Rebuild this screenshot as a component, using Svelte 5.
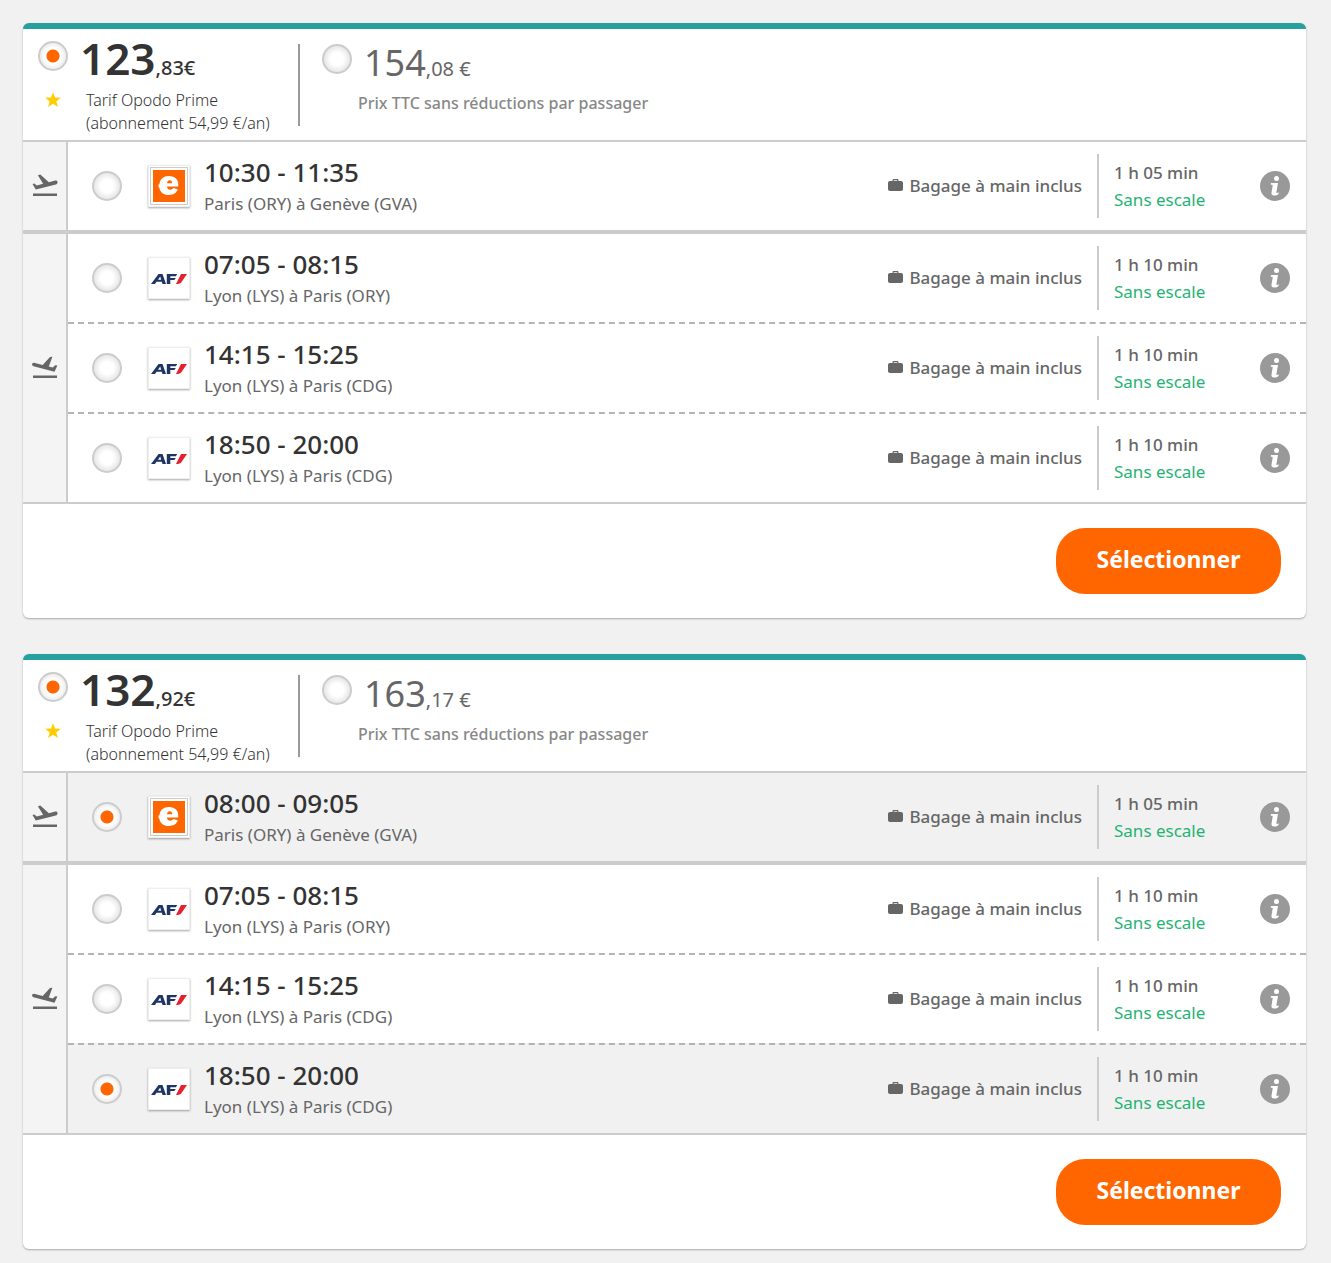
<script>
  const returns = [
    { time: '07:05 - 08:15', route: 'Lyon (LYS) à Paris (ORY)', length: '1 h 10 min', airline: 'af' },
    { time: '14:15 - 15:25', route: 'Lyon (LYS) à Paris (CDG)', length: '1 h 10 min', airline: 'af' },
    { time: '18:50 - 20:00', route: 'Lyon (LYS) à Paris (CDG)', length: '1 h 10 min', airline: 'af' }
  ];
  const offers = [
    {
      id: 'a', prime: ['123', ',83€'], full: ['154', ',08 €'],
      legs: [
        { kind: 'out', picked: -1, flights: [{ time: '10:30 - 11:35', route: 'Paris (ORY) à Genève (GVA)', length: '1 h 05 min', airline: 'ez' }] },
        { kind: 'back', picked: -1, flights: returns }
      ]
    },
    {
      id: 'b', prime: ['132', ',92€'], full: ['163', ',17 €'],
      legs: [
        { kind: 'out', picked: 0, flights: [{ time: '08:00 - 09:05', route: 'Paris (ORY) à Genève (GVA)', length: '1 h 05 min', airline: 'ez' }] },
        { kind: 'back', picked: 2, flights: returns }
      ]
    }
  ];
</script>

<main>
  {#each offers as offer}
    <form class="card" onsubmit={(e) => e.preventDefault()}>
      <header>
        <div class="fare prime">
          <input type="radio" name="fare-{offer.id}" id="prime-{offer.id}" checked />
          <label class="price" for="prime-{offer.id}">{offer.prime[0]}<small>{offer.prime[1]}</small></label>
          <svg class="star" viewBox="0 0 16 16" aria-hidden="true"><path d="M8 .3l2 5.300 5.800.2-4.500 3.600 1.600 5.600L8 11.800 3.100 15l1.600-5.600L.2 5.800 6 5.600z" /></svg>
          <p>Tarif Opodo Prime<br />(abonnement 54,99 €/an)</p>
        </div>
        <div class="fare full">
          <input type="radio" name="fare-{offer.id}" id="full-{offer.id}" />
          <label class="price" for="full-{offer.id}">{offer.full[0]}<small>{offer.full[1]}</small></label>
          <p>Prix TTC sans réductions par passager</p>
        </div>
      </header>

      {#each offer.legs as leg}
        <section class="leg">
          <div class="side">
            <svg class="plane" viewBox="0 0 26 26" aria-hidden="true">
              {#if leg.kind === 'out'}
                <path d="M1 22.500h24v2.500H1zM25.500 10.700c-.3-1-1.300-1.300-2.300-1.100l-6.300 1.600L8.300 3.600l-2.400.6 5.200 8.600-6.300 1.600-2.500-1.900-1.800.4 3.300 5.700 20-5.100c1.200-.3 2-1.600 1.700-2.800z" />
              {:else}
                <path d="M1 22.500h24v2.500H1zM.3 10.600C.8 9.800 1.800 9.600 3 9.900l7.700 2L18 3.900l2.400-.2-3.600 9.900 3.900 1 2.500-2.300 2.200.1-2.900 6.300L1.500 13.200c-1.200-.4-1.700-1.500-1.200-2.600z" />
              {/if}
            </svg>
          </div>
          <div class="flights">
            {#each leg.flights as f, i}
              <div class="flight" class:selected={leg.picked === i}>
                <input type="radio" name="{leg.kind}-{offer.id}" id="{leg.kind}-{offer.id}-{i}" checked={leg.picked === i} />
                <span class="logo">
                  {#if f.airline === 'ez'}
                    <svg viewBox="0 0 38 38" role="img" aria-label="easyJet">
                      <rect x=".5" y=".5" width="37" height="37" fill="#fff" stroke="#ccc" />
                      <rect x="3" y="3" width="32" height="32" fill="#f60" />
                      <path fill="#fff" fill-rule="evenodd" d="M19 9c6 0 9.500 3.500 9.300 9l-.2 1.500H17c.3 2.200 1.500 3.200 3.300 3.200 1.400 0 2.300-.6 3-1.700l4.500 1.300C26.500 26.300 23.500 28 19 28c-5.500 0-9-3-9.700-7.600L8.500 20v-2.400l.9-.3C10 12 13.500 9 19 9zm-2 7.200h5.200c-.1-2-1-3-2.500-3s-2.500 1-2.700 3z" />
                    </svg>
                  {:else}
                    <svg viewBox="0 0 38 38" role="img" aria-label="Air France">
                      <path fill="#1f3564" fill-rule="evenodd" d="M1 25l7.500-10h4L16 25h-3.500l-.7-2.200H6.500L5 25zm7-4.300h3.200l-1-3.200zM16.800 15h10.500l-1.500 2.200h-5.500v1.700h5.500l-1.400 2h-4.100V25h-3.500z" />
                      <path fill="#e8202e" d="M31 15h6l-5.500 8c-1 1.500-2.500 2-5.500 2z" />
                    </svg>
                  {/if}
                </span>
                <label class="info" for="{leg.kind}-{offer.id}-{i}">
                  <strong>{f.time}</strong>
                  <span>{f.route}</span>
                </label>
                <span class="bag">
                  <svg viewBox="0 0 15 12" aria-hidden="true"><path fill-rule="evenodd" d="M4.500 2V1.200C4.500.5 5 0 5.700 0h3.600c.7 0 1.200.5 1.200 1.200V2H13c1.200 0 2 .8 2 2v6c0 1.200-.8 2-2 2H2c-1.200 0-2-.8-2-2V4c0-1.200.8-2 2-2zm1.200 0h3.600v-.8H5.700z" /></svg>
                  Bagage à main inclus
                </span>
                <span class="length"><b>{f.length}</b><em>Sans escale</em></span>
                <button type="button" class="details" aria-label="Détails du vol">
                  <svg viewBox="0 0 30 30" aria-hidden="true">
                    <circle cx="15" cy="15" r="15" fill="#999" />
                    <circle cx="16.500" cy="7.500" r="2.500" fill="#fff" />
                    <path fill="#fff" d="M11 12h7l-1.600 9c-.1.800.2 1 .8.900l1.600-.6-.3 1.700c-1.300 1.100-2.800 1.600-4.500 1.500-1.900-.1-2.800-1.200-2.500-3l1.200-7c.1-.6-.1-.8-.6-.8h-1.400z" />
                  </svg>
                </button>
              </div>
            {/each}
          </div>
        </section>
      {/each}

      <footer><button type="submit" class="select">Sélectionner</button></footer>
    </form>
  {/each}
</main>

<style>
  :global(body) { margin: 0; background: #f1f1f1; }
  main {
    box-sizing: border-box;
    display: flex;
    flex-direction: column;
    gap: 36px;
    padding: 23px 25px 13px 23px;
    font-family: "Noto Sans", "Open Sans", sans-serif;
    color: #666;
  }
  .card {
    background: #fff;
    border-top: 6px solid #26a19f;
    border-radius: 6px;
    box-shadow: 0 1px 2px rgba(0, 0, 0, 0.3);
  }
  header { display: flex; min-height: 111px; border-bottom: 2px solid #ccc; }
  p { margin: 0; }
  input {
    appearance: none;
    box-sizing: border-box;
    flex: none;
    width: 30px;
    height: 30px;
    margin: 0;
    border: 2px solid #ccc;
    border-radius: 50%;
    background: radial-gradient(circle, #fff 35%, #e6e6e6 72%);
  }
  input:checked { background: radial-gradient(circle, #f60 0 6px, #fff 7px 8px, #e6e6e6 15px); }
  .fare { display: grid; align-content: start; }
  .prime {
    grid-template-columns: 30px auto;
    column-gap: 12px;
    width: 260px;
    padding: 12px 0 0 15px;
    color: #333;
  }
  .full {
    grid-template-columns: 30px auto;
    column-gap: 12px;
    margin-top: 15px;
    height: 82px;
    padding-left: 22px;
    border-left: 2px solid #999;
  }
  .price { white-space: nowrap; }
  .prime .price { font-size: 44px; font-weight: 600; line-height: 34px; height: 48px; }
  .prime small { font-size: 20px; font-weight: 500; }
  .full .price { font-size: 36px; line-height: 38px; height: 48px; }
  .full small { font-size: 20px; }
  .prime p { font-size: 16px; line-height: 23px; font-weight: 350; padding-left: 6px; }
  .full p { grid-column: 1 / 3; padding-left: 36px; font-size: 16px; line-height: 23px; font-weight: 500; color: #888; }
  .star { width: 16px; height: 16px; margin: 3px 7px; fill: #fc0; }
  .leg { display: flex; border-bottom: 4px solid #ccc; }
  .leg:last-of-type { border-bottom-width: 2px; }
  .side {
    flex: none;
    display: flex;
    align-items: center;
    justify-content: center;
    width: 43px;
    padding-bottom: 4px;
    background: #f4f4f4;
    border-right: 2px solid #ccc;
  }
  .plane { width: 26px; height: 26px; fill: #666; }
  .flights { flex: 1; }
  .flight { display: flex; align-items: center; height: 88px; padding: 0 16px 0 24px; }
  .flight + .flight { border-top: 2px dashed #b4b4b4; }
  .selected { background: #f1f1f1; }
  .logo {
    display: flex;
    box-sizing: border-box;
    flex: none;
    width: 42px;
    height: 42px;
    margin-left: 26px;
    padding: 1px;
    background: #fff;
    border: 1px solid #eee;
    box-shadow: 0 1px 2px rgba(0, 0, 0, 0.35);
  }
  .logo svg { width: 100%; }
  .info { flex: 1; padding-left: 14px; }
  .info strong { display: block; font-size: 26px; line-height: 36px; font-weight: 500; color: #333; }
  .info span { display: block; font-size: 17px; line-height: 28px; }
  .bag { display: flex; align-items: center; gap: 6px; padding: 0 15px 2px 0; font-size: 17px; font-weight: 500; }
  .bag svg { width: 15px; height: 12px; fill: #666; }
  .length { width: 146px; padding: 5px 0 5px 15px; border-left: 2px solid #ccc; font-size: 17px; line-height: 27px; }
  .length b, .length em { display: block; font-weight: 500; font-style: normal; }
  .length em { font-weight: 400; color: #1fb472; }
  .details { width: 30px; height: 30px; padding: 0; border: 0; border-radius: 50%; background: none; }
  .details svg { display: block; width: 30px; height: 30px; }
  footer { display: flex; justify-content: flex-end; padding: 24px 25px; }
  .select {
    width: 225px;
    height: 66px;
    padding: 0 0 4px;
    border: 0;
    border-radius: 29px;
    background: #f60;
    color: #fff;
    font: 700 23px "Noto Sans", "Open Sans", sans-serif;
  }
</style>
